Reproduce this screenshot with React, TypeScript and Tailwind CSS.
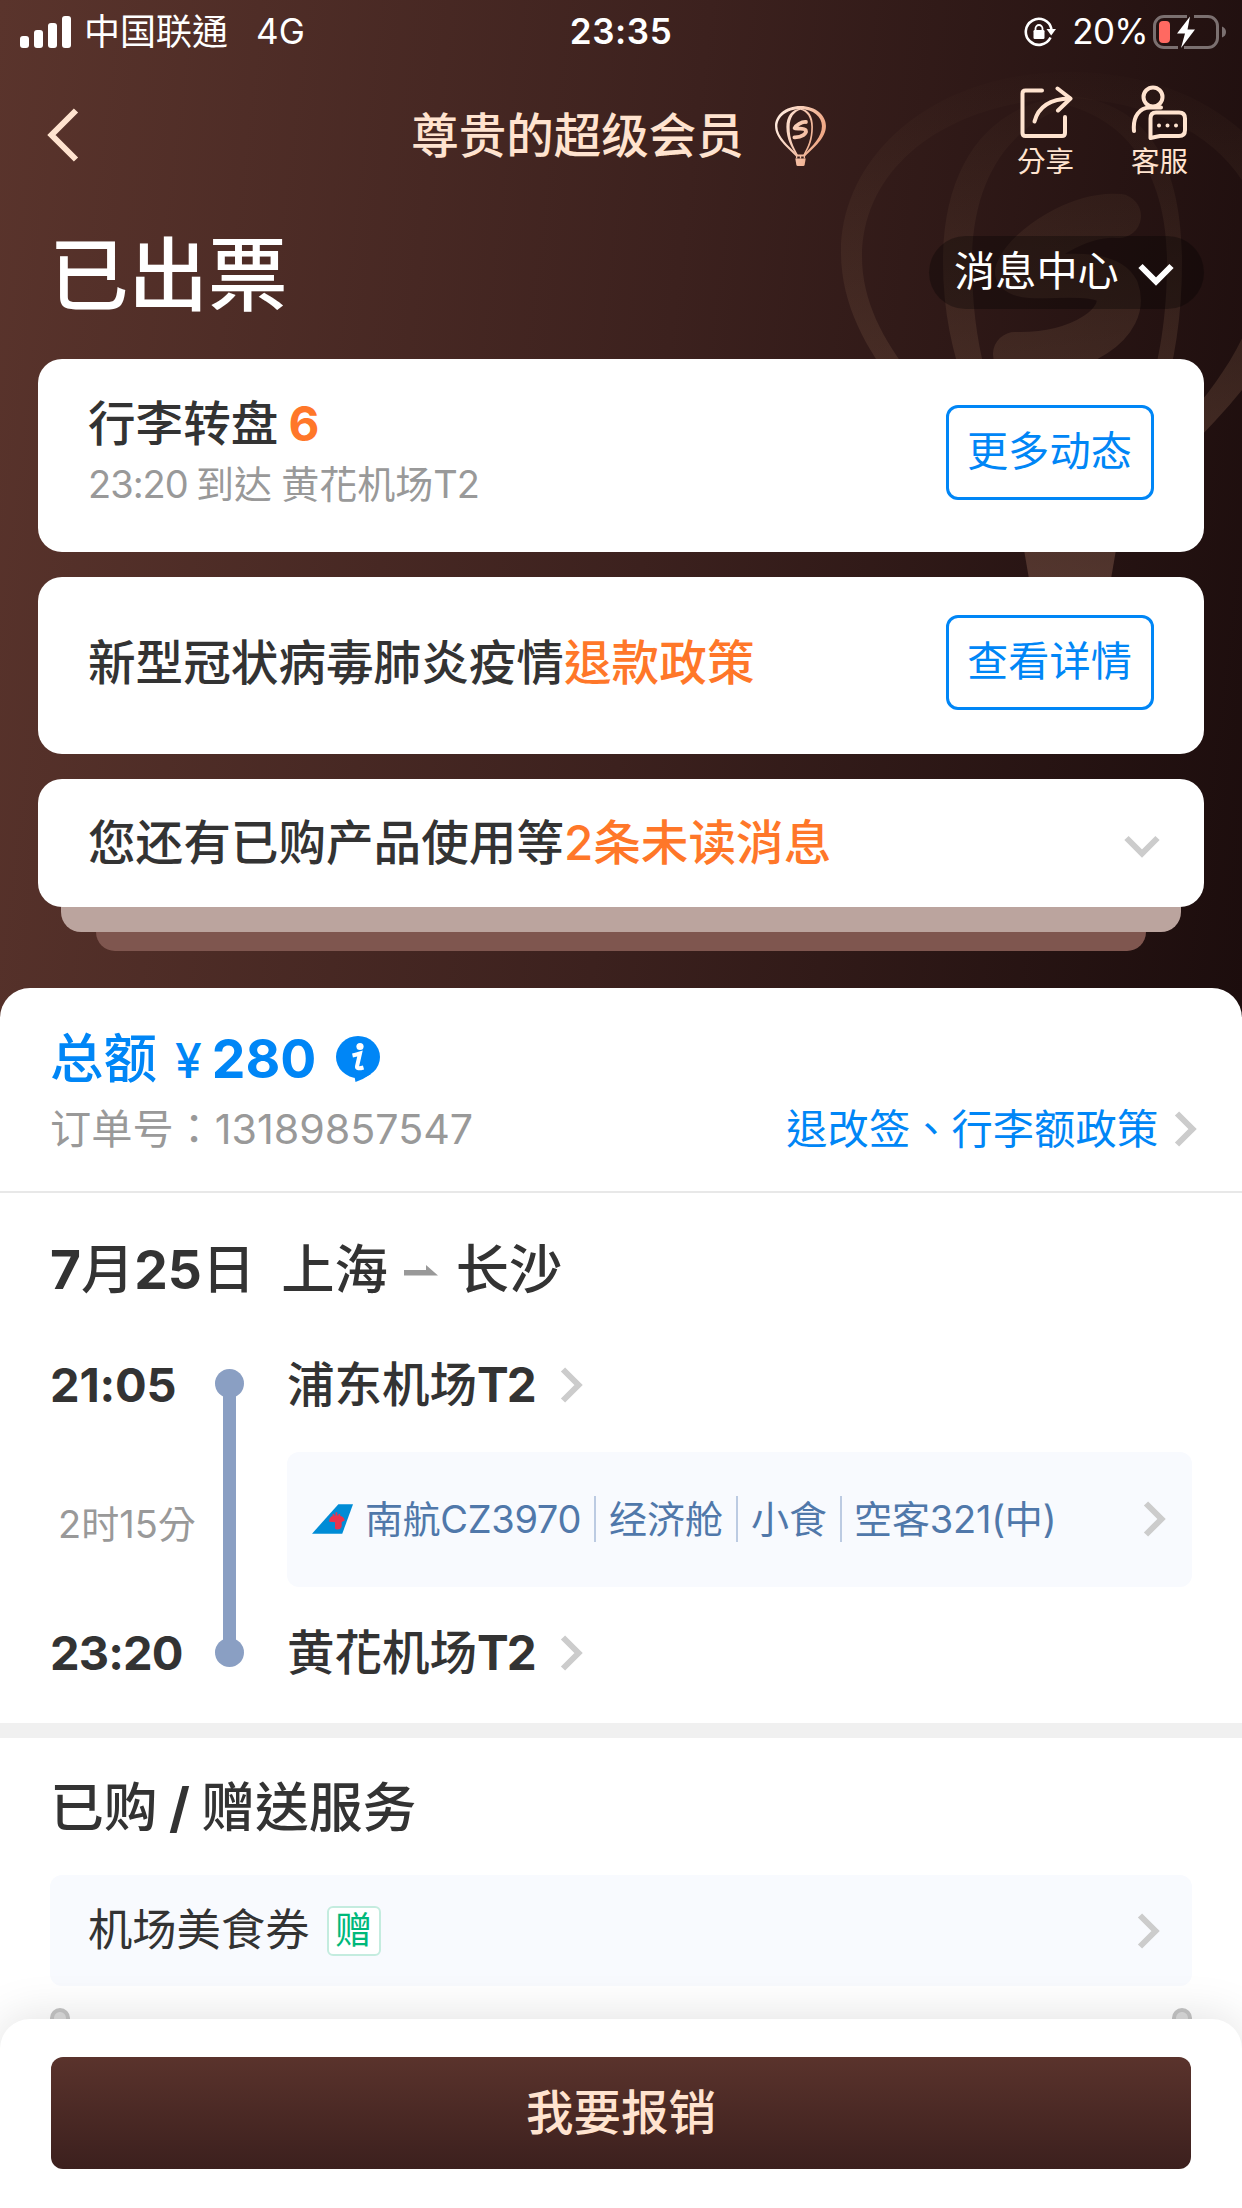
import type { ReactNode } from "react";

function Balloon({ id, from, to, fromOpacity, toOpacity, letterWidth, className }: {
  id: string;
  from: string;
  to: string;
  fromOpacity: number;
  toOpacity: number;
  letterWidth: number;
  className: string;
}) {
  const paint = `url(#${id})`;
  return (
    <svg viewBox="0 0 458 540" className={className} fill="none">
      <defs>
        <linearGradient id={id} gradientUnits="userSpaceOnUse" x1="60" y1="0" x2={id === "badge" ? 458 : 60} y2={id === "badge" ? 120 : 520}>
          <stop offset="0" stopColor={from} stopOpacity={fromOpacity} />
          <stop offset="1" stopColor={to} stopOpacity={toOpacity} />
        </linearGradient>
      </defs>
      {/* envelope */}
      <path
        fill={paint}
        fillRule="evenodd"
        d="M229 0C90 0 0 85 0 180C0 290 110 370 190 455H268C350 370 458 290 458 180C458 85 368 0 229 0Z M225 26C105 30 21 95 21 185C21 280 120 355 197 437H260C340 355 422 280 422 180C422 95 345 30 225 26Z"
      />
      {/* middle panel */}
      <path
        fill={paint}
        fillRule="evenodd"
        d="M229 24C150 30 102 90 102 190C102 300 150 380 192 440H266C310 380 341 300 341 190C341 90 305 30 229 24Z M229 34C175 50 131 100 131 190C131 300 165 370 206 440H254C295 370 326 300 326 190C326 100 285 50 229 34Z"
      />
      {/* basket */}
      <path fill={paint} d="M182 472H276L266 530Q264 540 254 540H204Q194 540 192 530Z" />
      <path stroke={paint} strokeWidth="12" d="M194 450V472M229 450V472M264 450V472" />
      <path
        stroke={paint}
        strokeWidth={letterWidth}
        strokeLinecap="round"
        strokeLinejoin="round"
        d="M278 144C240 140 186 174 176 200C188 212 262 192 276 218C288 250 240 284 174 282"
      />
    </svg>
  );
}

function Chevron({ className = "" }: { className?: string }) {
  return (
    <svg viewBox="0 0 24 36" className={`h-9 w-6 shrink-0 ${className}`} fill="none" stroke="#ccc" strokeWidth="6">
      <path d="M3 2.5L18.500 18L3 33.500" />
    </svg>
  );
}

function ChevronDown({ className = "" }: { className?: string }) {
  return (
    <svg viewBox="0 0 36 24" className={`h-6 w-9 shrink-0 ${className}`} fill="none" stroke="currentColor" strokeWidth="6">
      <path d="M2.500 3L18 18.500L33.500 3" />
    </svg>
  );
}

function StatusBar() {
  return (
    <div className="flex h-[63px] items-center text-[35px] leading-none text-white">
      <div className="flex flex-1 items-center pl-5">
        <div className="flex items-end gap-[5px]">
          <div className="h-3 w-[9px] rounded-[3px] bg-white" />
          <div className="h-[18px] w-[9px] rounded-[3px] bg-white" />
          <div className="h-[25px] w-[9px] rounded-[3px] bg-white" />
          <div className="h-8 w-[9px] rounded-[3px] bg-white" />
        </div>
        <span className="ml-[13px] text-[36px]">中国联通</span>
        <span className="ml-7">4G</span>
      </div>
      <span className="font-semibold tracking-[0.6px]">23:35</span>
      <div className="flex flex-1 items-center justify-end pr-5">
        <svg viewBox="0 0 32 30" className="h-[30px] w-8" fill="none">
          <path d="M26.500 20.500A13 13 0 1 1 27.500 12" stroke="#fff" strokeWidth="2.600" />
          <path d="M22.500 12H32L27.200 18.500Z" fill="#fff" />
          <rect x="9.500" y="13" width="11" height="9" rx="1.200" fill="#fff" />
          <path d="M11.500 13.500V11.500a3.500 3.500 0 0 1 7 0v2" stroke="#fff" strokeWidth="1.800" />
        </svg>
        <span className="ml-4 tracking-[-0.7px]">20%</span>
        <svg viewBox="0 0 74 34" className="-mr-[5px] ml-[5px] h-[34px] w-[74px]" fill="none">
          <path
            d="M34 1.500H11A9.500 9.500 0 0 0 1.500 11V23A9.500 9.500 0 0 0 11 32.500H25M41 1.500H55A9.500 9.500 0 0 1 64.500 11V23A9.500 9.500 0 0 1 55 32.500H31"
            stroke="#7b7070"
            strokeWidth="3"
          />
          <path d="M69 11.500Q73 13 73 17T69 22.500Z" fill="#7b7070" />
          <rect x="6" y="6" width="11" height="22" rx="4" fill="#ff6961" />
          <path d="M37 1.500L24 18.500H32L28 33L42 14.500H34.500Z" fill="#fff" />
        </svg>
      </div>
    </div>
  );
}

function NavBar() {
  return (
    <div className="flex h-[145px] items-center text-[#ffe3cf]">
      <div className="flex-1 pb-[2px] pl-[47px]">
        <svg viewBox="0 0 32 54" className="h-[54px] w-8" fill="none" stroke="currentColor" strokeWidth="6">
          <path d="M29 2.500L4.500 27L29 51.500" />
        </svg>
      </div>
      <div className="flex items-center">
        <h1 className="pl-[2px] text-[47.500px] leading-[60px] font-medium">尊贵的超级会员</h1>
        <Balloon
          id="badge"
          from="#ffe9dc"
          to="#f0a987"
          fromOpacity={1}
          toOpacity={1}
          letterWidth={34}
          className="ml-[31px] h-[60px] w-[51px]"
        />
      </div>
      <div className="flex flex-1 items-start justify-end gap-[57px] pr-[54px] pb-2">
        <button className="flex flex-col items-center gap-[5px]">
          <svg viewBox="0 0 56 56" className="h-14 w-14" fill="none" stroke="currentColor" strokeWidth="4" strokeLinecap="round" strokeLinejoin="round">
            <path d="M25 5.500H8.500Q5.500 5.500 5.500 8.500V48Q5.500 51 8.500 51H45Q48 51 48 48V32" />
            <path d="M17.500 36.500C21 23 32 14 53 13.500" />
            <path d="M40.500 3.500L53.500 13.500L41 25.500" />
          </svg>
          <span className="text-[28.500px] leading-8">分享</span>
        </button>
        <button className="flex flex-col items-center gap-[5px]">
          <svg viewBox="0 0 56 56" className="h-14 w-14" fill="none" stroke="currentColor" strokeWidth="4" strokeLinecap="round" strokeLinejoin="round">
            <circle cx="22" cy="12" r="9.500" />
            <path d="M3 46C1.500 31 9 22.500 19 22.500H30" />
            <path d="M25 27.500H48Q54 27.500 54 33.500V45Q54 51 48 51H29Q24 52 19.500 53V33.500Q19.500 27.500 25 27.500Z" />
            <path d="M28 40.500H28.010M36.500 40.500H36.510M45 40.500H45.010" />
          </svg>
          <span className="text-[28.500px] leading-8">客服</span>
        </button>
      </div>
    </div>
  );
}

function OutlineButton({ children, className = "" }: { children: ReactNode; className?: string }) {
  return (
    <button className={`h-[95px] w-[208px] rounded-xl border-[3px] border-[#0086f6] pr-[1px] pb-1 text-[41.200px] text-[#0086f6] ${className}`}>
      {children}
    </button>
  );
}

function MessageCards() {
  return (
    <div className="px-[38px] pt-[21px] pb-[67px] text-[47.600px] leading-[60px] text-[#333]">
      <div className="flex h-[193px] items-center justify-between rounded-3xl bg-white px-[50px]">
        <div className="pb-[3px]">
          <p className="font-medium">
            行李转盘<span className="ml-[10px] font-bold text-[#ff7729]">6</span>
          </p>
          <p className="text-[38px] leading-[60px] text-[#999] [word-spacing:-1.500px]">
            <span className="tracking-[-1px]">23:20 </span>到达 黄花机场<span className="tracking-[-1px]">T2</span>
          </p>
        </div>
        <OutlineButton className="mb-[6px]">更多动态</OutlineButton>
      </div>

      <div className="mt-[25px] flex h-[177px] items-center justify-between rounded-3xl bg-white px-[50px] pb-[6px]">
        <p className="font-medium">
          新型冠状病毒肺炎疫情<span className="text-[#ff7729]">退款政策</span>
        </p>
        <OutlineButton>查看详情</OutlineButton>
      </div>

      <div className="mt-[25px] flex h-32 items-center justify-between rounded-3xl bg-white pr-[44px] pl-[50px]">
        <p className="font-medium">
          您还有已购产品使用等<span className="text-[#ff7729]">2条未读消息</span>
        </p>
        <ChevronDown className="mt-2 text-[#ccc]" />
      </div>
      {/* collapsed messages peeking out under the last card */}
      <div className="mx-[23px] h-[25px] rounded-b-[20px] bg-[#bba49e]" />
      <div className="mx-[58px] h-[19px] rounded-b-[20px] bg-[#7f564f]" />
    </div>
  );
}

function Separator() {
  return <span className="h-[46px] w-[2px] bg-[#bccbe2]" />;
}

function Airport({ name, terminal }: { name: string; terminal: string }) {
  return (
    <div className="flex items-center text-[47.500px] leading-[60px] font-medium">
      {name}
      <b className="tracking-[-2px]">{terminal}</b>
      <Chevron className="ml-[25px]" />
    </div>
  );
}

function Flight() {
  return (
    <section className="pt-[47px] pr-[50px] pb-10 pl-[50px] text-[#333]">
      <h2 className="flex items-center text-[53.300px] leading-[60px] font-medium">
        <span><b>7</b>月<b>25</b>日</span>
        <span className="ml-[26px]">上海</span>
        <svg viewBox="0 0 34 12" className="mr-[18px] ml-[16px] h-3 w-[34px]" fill="#999">
          <path d="M0 6H22V1L34 11.500H0Z" />
        </svg>
        <span>长沙</span>
      </h2>

      <div className="mt-[55px] flex">
        <div className="flex w-[165px] flex-col text-[47px] leading-[60px] font-bold">
          <span className="tracking-[-0.2px]">21:05</span>
          <span className="flex flex-1 items-center pt-[10px] pl-2 text-[38px] font-normal text-[#999]">2时15分</span>
          <span className="tracking-[-0.9px]">23:20</span>
        </div>
        <div className="mt-[14px] mb-4 flex w-[29px] flex-col items-center">
          <div className="size-[29px] rounded-full bg-[#8a9fc3]" />
          <div className="-my-1 w-[13px] flex-1 bg-[#8a9fc3]" />
          <div className="size-[29px] rounded-full bg-[#8a9fc3]" />
        </div>
        <div className="ml-[43px] flex-1">
          <Airport name="浦东机场" terminal="T2" />
          <div className="mt-[37px] mb-9 flex h-[135px] items-center rounded-xl bg-[#f8fafe] pr-[25px] pb-[2px] pl-[25px] text-[38px] leading-none text-[#5078aa]">
            <svg viewBox="0 0 42 30" className="mr-[12px] h-[30px] w-[41px]">
              <path d="M27 0H42L31 30H0Z" fill="#008cd6" />
              <path d="M25 8v6M22 10v4M28 10v4M18.500 17q0-5 6.500-5t7.500 4l-3 1.500v5q-1.500 3.500-5 2v-7z" fill="#e8344e" stroke="#e8344e" strokeWidth="1.800" />
            </svg>
            <span className="pr-[13px] tracking-[-0.35px]">南航CZ3970</span>
            <Separator />
            <span className="px-[13px]">经济舱</span>
            <Separator />
            <span className="px-[13px]">小食</span>
            <Separator />
            <span className="pl-[12px] tracking-[-0.2px]">空客321(中)</span>
            <Chevron className="ml-auto" />
          </div>
          <Airport name="黄花机场" terminal="T2" />
        </div>
      </div>
    </section>
  );
}

export default function App() {
  return (
    <div className="flex h-[2208px] w-[1242px] flex-col overflow-hidden bg-white font-['Inter','Noto_Sans_CJK_TC',sans-serif]">
      <header className="relative shrink-0 overflow-hidden bg-linear-[97deg,#5a342c_0%,#3c211e_52%,#1c0d0d_100%]">
        <Balloon
          id="watermark"
          from="#70543a"
          to="#80584a"
          fromOpacity={0.02}
          toOpacity={0.5}
          letterWidth={44}
          className="absolute top-[72px] left-[841px] h-[540px] w-[458px]"
        />
        <div className="relative">
          <StatusBar />
          <NavBar />
          <div className="flex h-[130px] items-center justify-between pr-[38px] pl-[49px] text-white">
            <span className="pt-[5px] text-[79.500px] leading-none font-medium">已出票</span>
            <button className="-mt-[2px] flex h-[73px] w-[275px] items-center rounded-full bg-black/30 pl-[25px] text-[41.200px]">
              消息中心
              <ChevronDown className="mt-[6px] ml-[19px]" />
            </button>
          </div>
          <MessageCards />
        </div>
      </header>

      <main className="relative -mt-[30px] min-h-0 flex-1 overflow-hidden rounded-t-[30px] bg-white">
        <section className="border-b-2 border-[#e8e8e8] pt-[41px] pr-[44px] pb-[37px] pl-[50px]">
          <div className="flex items-center text-[53.500px] leading-[60px] font-medium text-[#0086f6]">
            总额
            <span className="ml-[18px] pt-[3px] text-[48px] leading-[57px]">¥</span>
            <b className="ml-[10px]">280</b>
            <svg viewBox="0 0 44 46" className="ml-5 h-[46px] w-11">
              <ellipse cx="22" cy="21" rx="22" ry="21" fill="#0086f6" />
              <path d="M18 38H35Q28 43 19.500 46Z" fill="#0086f6" />
              <circle cx="24" cy="10.500" r="3.600" fill="#fff" />
              <path d="M16.500 19.500Q21 18.500 24 17.500L21 30.500Q20.500 33.500 27.500 31.500" fill="none" stroke="#fff" strokeWidth="4" />
            </svg>
          </div>
          <div className="mt-[15px] flex items-center leading-[50px]">
            <span className="text-[41.200px] text-[#999]">订单号：13189857547</span>
            <span className="ml-auto text-[41.300px] text-[#0086f6]">退改签、行李额政策</span>
            <Chevron className="ml-4" />
          </div>
        </section>

        <Flight />

        <div className="h-[15px] bg-[#f0f0f0]" />

        <section className="px-[50px] pt-10">
          <h2 className="text-[53.800px] leading-[60px] font-medium text-[#333] [word-spacing:-3px]">
            已购 <b>/</b> 赠送服务
          </h2>
          <div className="mt-[37px] flex h-[111px] items-center rounded-xl bg-[#f8fafe] pr-[31px] pl-[38px]">
            <span className="text-[44.300px] text-[#333]">机场美食券</span>
            <span className="ml-[17px] flex h-[50px] w-[54px] items-center justify-center rounded-md border-2 border-[#c4ecdf] bg-white text-[37px] leading-none text-[#00b87a]">
              赠
            </span>
            <Chevron className="ml-auto" />
          </div>
          <div className="mt-[22px] flex justify-between">
            <div className="size-5 rounded-full border-4 border-[#c4c4c4] bg-[#dcdcdc]" />
            <div className="size-5 rounded-full border-4 border-[#c4c4c4] bg-[#dcdcdc]" />
          </div>
        </section>
      </main>

      <footer className="relative z-10 h-[189px] shrink-0 rounded-t-[30px] bg-white px-[51px] pt-[38px] shadow-[0_0_48px_rgba(0,0,0,0.13)]">
        <button className="h-28 w-full rounded-xl bg-linear-to-b from-[#5a332c] to-[#3c201e] text-[47.500px] leading-none font-medium text-[#ffe3cf]">
          我要报销
        </button>
      </footer>
    </div>
  );
}
